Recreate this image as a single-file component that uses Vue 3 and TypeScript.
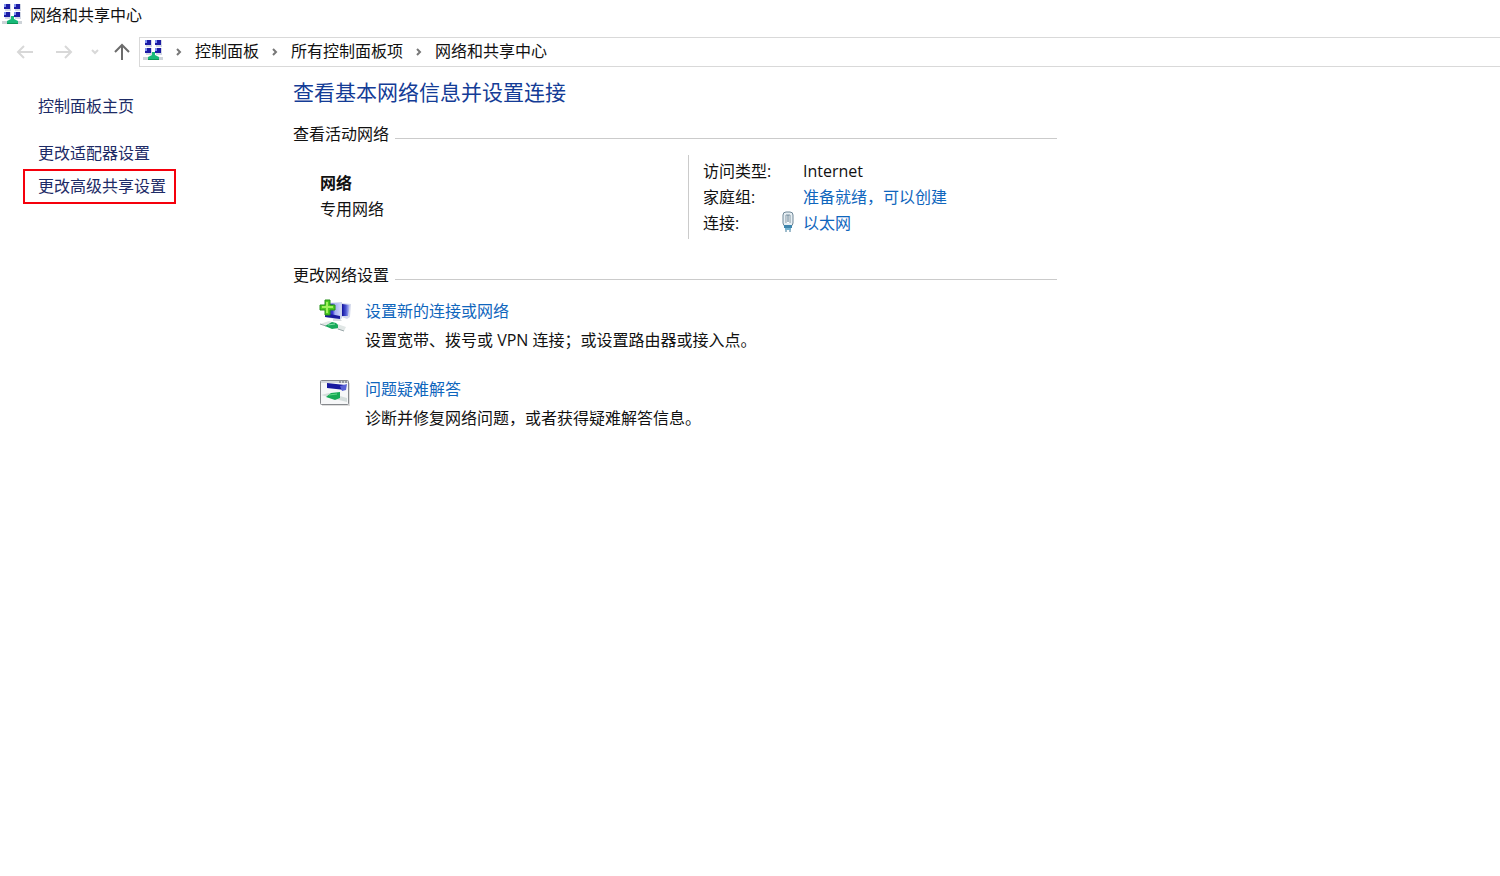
<script setup lang="ts">
interface Task {
  icon: 'add' | 'diagnose'
  title: string
  text: string
}

const crumbs: string[] = ['控制面板', '所有控制面板项', '网络和共享中心']

const tasks: Task[] = [
  { icon: 'add', title: '设置新的连接或网络', text: '设置宽带、拨号或 VPN 连接；或设置路由器或接入点。' },
  { icon: 'diagnose', title: '问题疑难解答', text: '诊断并修复网络问题，或者获得疑难解答信息。' },
]
</script>

<template>
  <svg class="defs" aria-hidden="true">
    <defs>
      <linearGradient id="screen" x1="0" y1="0" x2="1" y2="0">
        <stop offset="0" stop-color="#10109c" />
        <stop offset="0.45" stop-color="#3a3ad4" />
        <stop offset="0.6" stop-color="#a4aef0" />
        <stop offset="1" stop-color="#d0d6fa" />
      </linearGradient>
      <linearGradient id="screen-back" x1="0" y1="0" x2="1" y2="0">
        <stop offset="0" stop-color="#10109c" />
        <stop offset="0.5" stop-color="#4d58d4" />
        <stop offset="1" stop-color="#d0d6fa" />
      </linearGradient>
      <symbol id="network" viewBox="0 0 20 22">
        <path d="M2 1h7v7H3zM12 1h7v7h-6zM2 9h7v7H3zM12 9h7v7h-6z" fill="#d3d8e4" />
        <path d="M2 1h6v5H2zM12 1h6v5h-6zM2 9h6v5H2zM12 9h6v5h-6z" fill="#1c1ca4" />
        <path d="M2 1h2v3H2zM12 1h2v3h-2zM2 9h2v3H2zM12 9h2v3h-2z" fill="#7f92ee" />
        <path d="M0 18h20v3H0z" fill="#cdd3d8" />
        <path d="M9 13h3v3l4 2v3H5v-3l4-2z" fill="#17b978" />
        <path d="M5 20h11v1H5z" fill="#0c9455" />
      </symbol>
    </defs>
  </svg>

  <div class="window">
    <header class="titlebar">
      <svg class="net-icon" aria-hidden="true"><use href="#network" /></svg>
      <span>网络和共享中心</span>
    </header>

    <div class="toolbar">
      <div class="nav-buttons">
        <button type="button" class="nav" aria-label="后退" disabled>
          <svg width="18" height="16" viewBox="0 0 18 16"><path d="M17 8H2M8 2L2 8l6 6" /></svg>
        </button>
        <button type="button" class="nav" aria-label="前进" disabled>
          <svg width="18" height="16" viewBox="0 0 18 16"><path d="M1 8h15M10 2l6 6-6 6" /></svg>
        </button>
        <button type="button" class="nav recent" aria-label="最近位置" disabled>
          <svg width="8" height="6" viewBox="0 0 8 6"><path d="M1 1l3 3 3-3" /></svg>
        </button>
        <button type="button" class="nav up" aria-label="上移">
          <svg width="18" height="18" viewBox="0 0 18 18"><path d="M9 17V2M2 9l7-7 7 7" /></svg>
        </button>
      </div>
      <nav class="address" aria-label="地址">
        <svg class="net-icon" aria-hidden="true"><use href="#network" /></svg>
        <template v-for="crumb in crumbs" :key="crumb">
          <svg class="chevron" width="6" height="8" viewBox="0 0 6 8" aria-hidden="true"><path d="M1 1l3 3-3 3" /></svg>
          <a href="#">{{ crumb }}</a>
        </template>
      </nav>
    </div>

    <div class="body">
      <aside class="sidebar">
        <a href="#" class="home">控制面板主页</a>
        <a href="#">更改适配器设置</a>
        <a href="#" class="marked">更改高级共享设置</a>
      </aside>

      <main class="content">
        <h1>查看基本网络信息并设置连接</h1>

        <h2>查看活动网络</h2>
        <section class="active">
          <div class="network">
            <strong>网络</strong>
            <span>专用网络</span>
          </div>
          <dl class="details">
            <dt>访问类型:</dt>
            <dd>Internet</dd>
            <dt>家庭组:</dt>
            <dd><a href="#">准备就绪，可以创建</a></dd>
            <dt class="with-icon">
              连接:
              <svg width="12" height="22" viewBox="0 0 12 22" aria-hidden="true">
                <rect x="1" y="1" width="10" height="14" rx="3" fill="#e6eef3" stroke="#6f8797" />
                <path d="M4 12V4h4v8" fill="#fff" stroke="#8397a4" />
                <path d="M6 4v7" stroke="#53748a" />
                <path d="M2 14h8v3H2z" fill="#3f86ad" />
                <path d="M3 17h6v2H3z" fill="#75b3d0" />
                <path d="M4 19v2M8 19v2" stroke="#3f7898" />
              </svg>
            </dt>
            <dd><a href="#">以太网</a></dd>
          </dl>
        </section>

        <h2 class="change">更改网络设置</h2>
        <ul class="tasks">
          <li v-for="task in tasks" :key="task.title">
            <svg v-if="task.icon === 'add'" width="33" height="33" viewBox="0 0 33 33" aria-hidden="true">
              <path d="M23 4l9 1-1 13-3 2-5-2z" fill="#d5daec" />
              <path d="M23 5l8 1-2 11h-6z" fill="url(#screen-back)" />
              <path d="M7 4l16-1v16l-2 2L6 18z" fill="#ccd3ec" />
              <path d="M8 5l14-1-1 14-14-1z" fill="url(#screen)" />
              <path d="M6 14l15 3v3L6 18z" fill="#1a1b9c" />
              <path d="M14 20h7l2 2h-9z" fill="#d9dde0" />
              <path d="M1 25l9-3 17 6-2 4-8-2z" fill="#e1e7e6" />
              <path d="M1 25l6 2M19 30l6 2" stroke="#9aa7a9" fill="none" />
              <path d="M6 27l7-4 4 1 2 2v3l-6 1z" fill="#19a95b" />
              <path d="M9 26l7-1" stroke="#7ee0a4" />
              <path d="M6 1h5v5h5v5h-5v5H6v-5H1V6h5z" fill="#4dcc20" stroke="#26911a" />
              <path d="M8 3v11M3 8h11" stroke="#a2f25e" stroke-width="2" />
            </svg>
            <svg v-else width="33" height="33" viewBox="0 0 33 33" aria-hidden="true">
              <path d="M3 28h27V6" fill="none" stroke="#dedede" stroke-width="2" />
              <rect x="1.500" y="3.500" width="28" height="24" rx="1" fill="#f6f7f8" stroke="#85888c" />
              <path d="M2 4h27v2H2z" fill="#d5d9dd" />
              <path d="M20 5h2M23 5h2M26 5h2" stroke="#555b66" />
              <path d="M8 6l18 2v5L8 11z" fill="#17189f" />
              <path d="M21 9l7-2-1 6-4 1z" fill="#5962d5" />
              <path d="M2 18l8-2 18 5v4l-8-2z" fill="#d5dddc" />
              <path d="M7 20l5-4 9-1v6l-5 2z" fill="#18aa55" />
              <path d="M10 18l8-1" stroke="#61dd88" />
            </svg>
            <div>
              <a href="#">{{ task.title }}</a>
              <p>{{ task.text }}</p>
            </div>
          </li>
        </ul>
      </main>
    </div>
  </div>
</template>

<style>
body {
  margin: 0;
  background: #fff;
}
</style>

<style scoped>
.defs {
  position: absolute;
  width: 0;
  height: 0;
}
.window {
  font: 16px/24px "Open Sans", "Noto Sans CJK SC", sans-serif;
  color: #111;
}
a {
  color: #0f66bd;
  text-decoration: none;
}
.net-icon {
  width: 20px;
  height: 22px;
  flex: none;
}
.titlebar {
  display: flex;
  align-items: center;
  gap: 8px;
  height: 30px;
  padding-left: 2px;
}
.titlebar .net-icon {
  margin-bottom: 2px;
}
.toolbar {
  display: flex;
  margin-top: 7px;
}
.nav-buttons {
  display: flex;
  align-items: center;
  flex: none;
  width: 139px;
  box-sizing: border-box;
  padding-left: 16px;
}
.nav {
  display: flex;
  padding: 0;
  margin-right: 21px;
  border: 0;
  background: none;
}
.nav path {
  fill: none;
  stroke: #d8d8d8;
  stroke-width: 2;
}
.nav.recent {
  margin: 0 14px 0 -3px;
}
.nav.up {
  margin: 0;
}
.nav.up path {
  stroke: #6c6c6c;
}
.address {
  display: flex;
  align-items: center;
  flex: 1;
  box-sizing: border-box;
  height: 30px;
  padding: 0 0 2px 3px;
  border: 1px solid #d9d9d9;
  border-right: 0;
}
.address a {
  color: #111;
}
.address .net-icon {
  margin-bottom: 2px;
}
.chevron {
  flex: none;
  margin: 2px 13px 0;
}
.chevron path {
  fill: none;
  stroke: #777;
  stroke-width: 2;
}
.body {
  display: flex;
}
.sidebar {
  display: flex;
  flex-direction: column;
  align-items: flex-start;
  flex: none;
  width: 293px;
  box-sizing: border-box;
  padding: 27px 0 0 23px;
}
.sidebar a {
  padding: 0 15px;
  color: #1d2b66;
}
.sidebar .home {
  margin-bottom: 23px;
}
.sidebar .marked {
  margin-top: 4px;
  padding: 3px 8px 4px 13px;
  border: 2px solid #f5000c;
}
.content {
  flex: 1;
  max-width: 764px;
  padding-top: 10px;
}
h1 {
  margin: 0;
  font-size: 21px;
  line-height: 30px;
  font-weight: 400;
  color: #143c96;
}
h2 {
  display: flex;
  align-items: center;
  gap: 6px;
  margin: 15px 0 0;
  font-size: 16px;
  font-weight: 400;
}
h2::after {
  content: "";
  flex: 1;
  height: 1px;
  margin-top: 8px;
  background: #cbcbcb;
}
.active {
  display: grid;
  grid-template-columns: 395px 1fr;
  margin-top: 9px;
  line-height: 26px;
}
.network {
  display: flex;
  flex-direction: column;
  padding: 15px 0 0 27px;
}
.details {
  display: grid;
  grid-template-columns: 100px 1fr;
  margin: 0;
  padding: 3px 0 3px 14px;
  border-left: 1px solid #cbcbcb;
}
.details dd {
  margin: 0;
}
.with-icon {
  display: flex;
  align-items: center;
  justify-content: space-between;
  padding-right: 9px;
}
.with-icon svg {
  margin-bottom: 2px;
}
h2.change {
  margin-top: 24px;
}
.tasks {
  display: flex;
  flex-direction: column;
  gap: 20px;
  margin: 10px 0 0;
  padding: 0 0 0 26px;
  list-style: none;
  line-height: 29px;
}
.tasks li {
  display: flex;
  gap: 13px;
}
.tasks svg {
  flex: none;
  margin-top: 2px;
}
.tasks p {
  margin: 0;
}
</style>
